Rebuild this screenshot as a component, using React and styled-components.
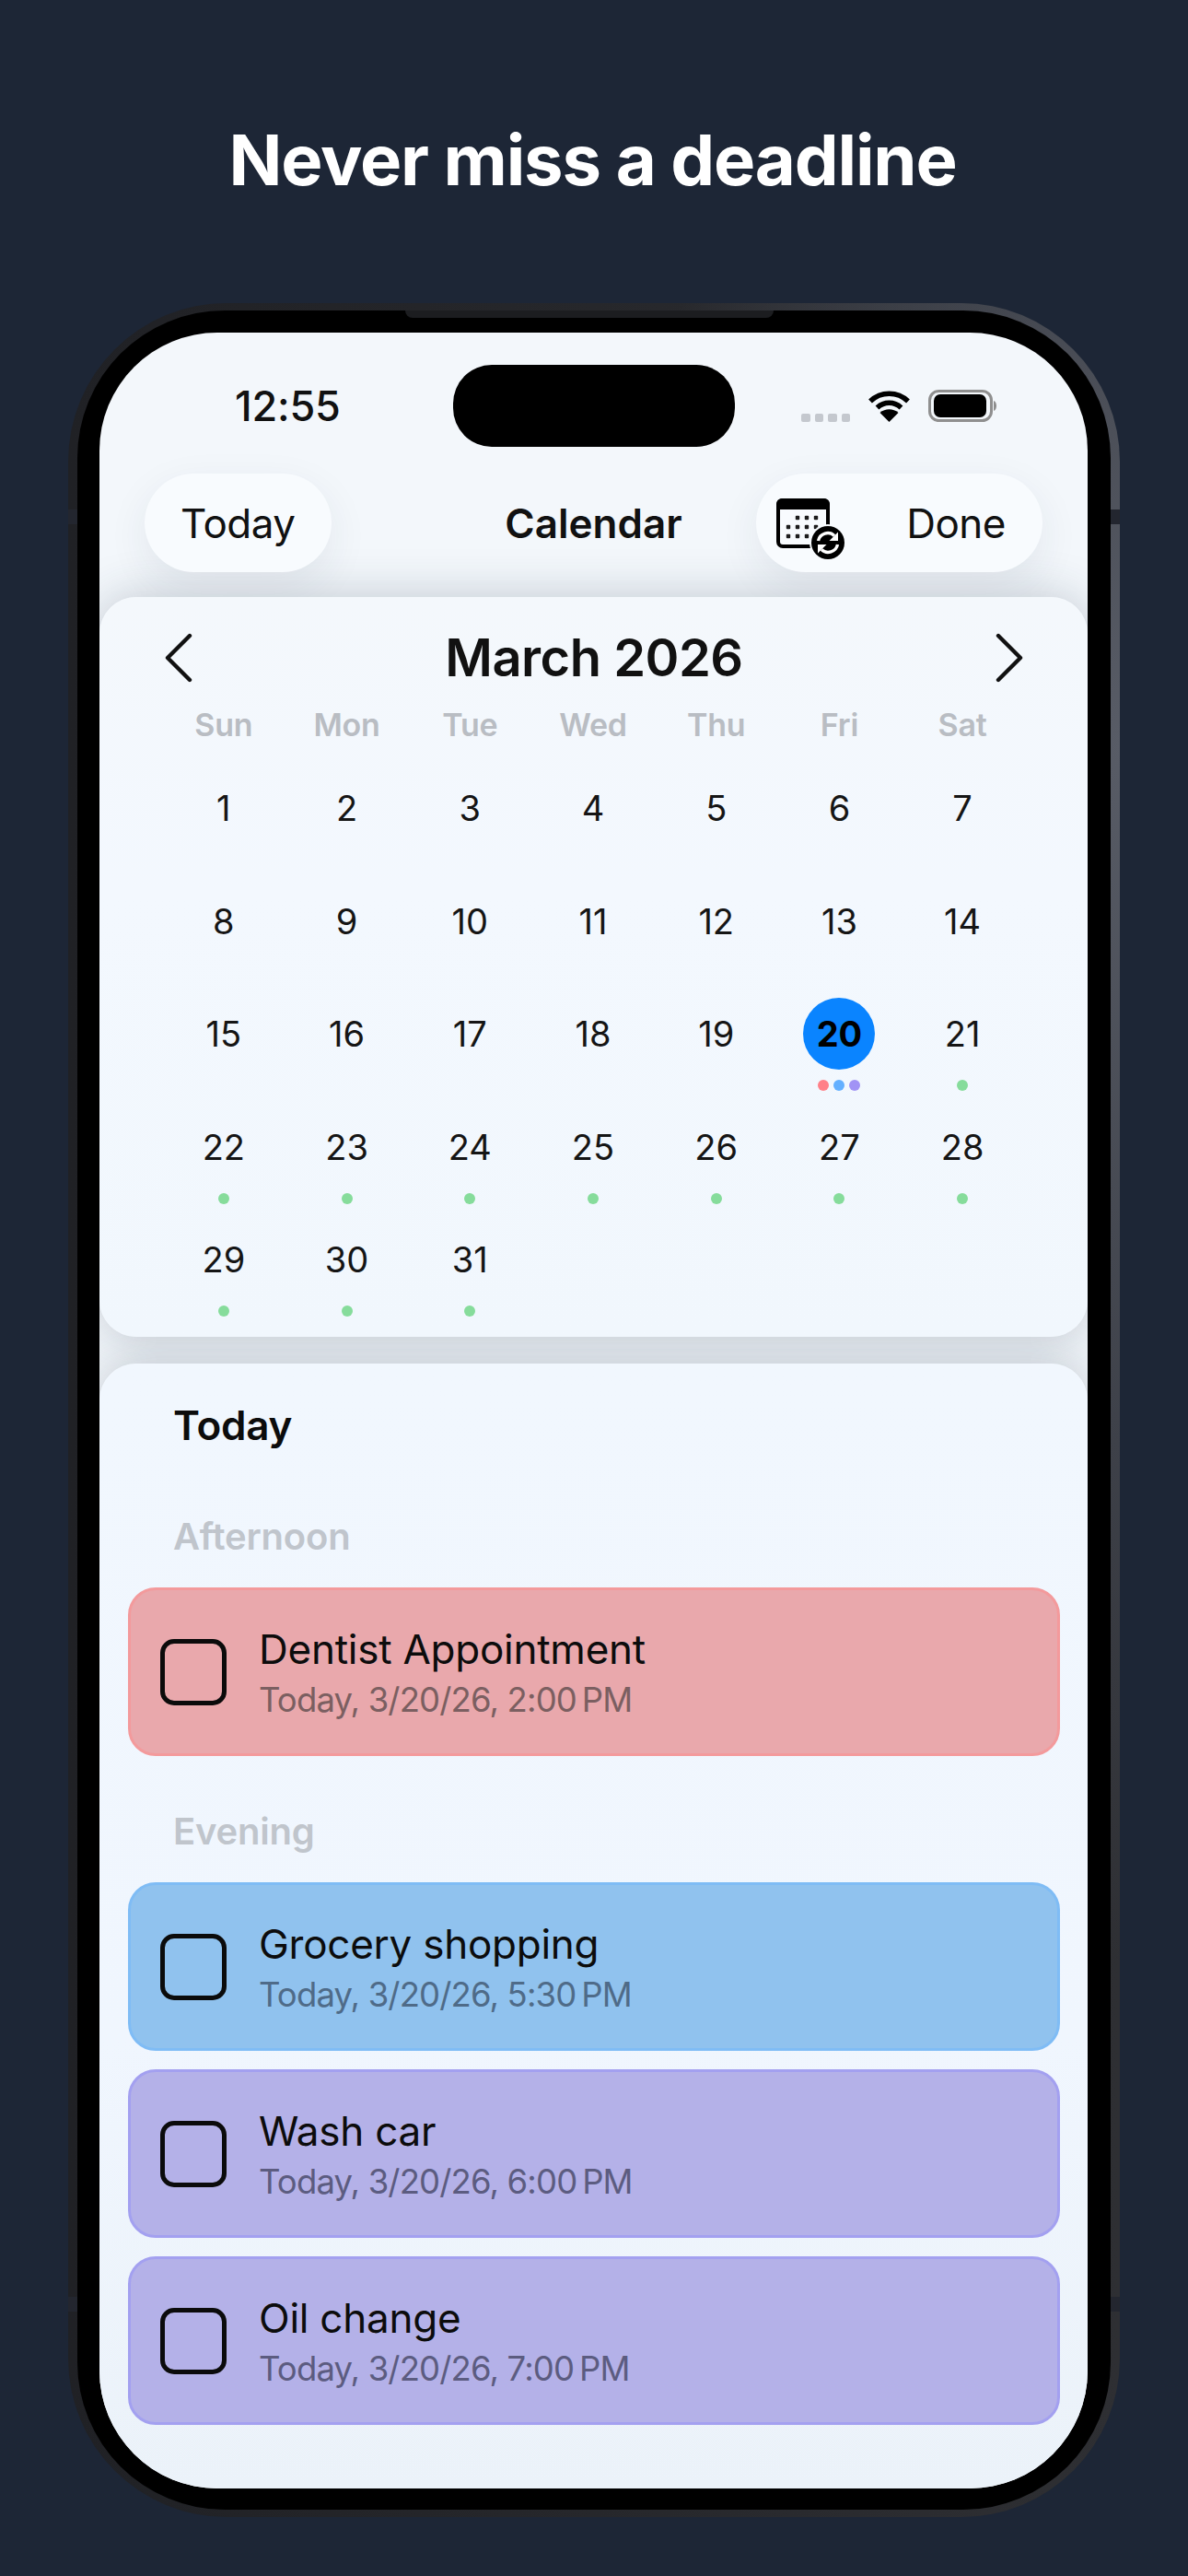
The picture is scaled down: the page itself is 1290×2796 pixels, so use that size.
import React from "react";
import styled, { createGlobalStyle } from "styled-components";

const GlobalStyle = createGlobalStyle`
  html, body {
    margin: 0;
    padding: 0;
    background: #1d2636;
    font-family: "Inter", "Liberation Sans", sans-serif;
  }
`;

const Page = styled.div`
  width: 1290px;
  height: 2796px;
  overflow: hidden;
  background: #1d2636;
  display: flex;
  flex-direction: column;
  align-items: center;
  padding-top: 128px;
  box-sizing: border-box;
`;

const Headline = styled.h1`
  margin: 0 0 111px;
  padding-right: 3px;
  height: 90px;
  line-height: 90px;
  font-size: 76px;
  font-weight: 700;
  letter-spacing: -1.2px;
  color: #fff;
`;

const Phone = styled.div`
  position: relative;
  width: 1142px;
  height: 2403px;
  box-sizing: border-box;
  padding: 8px 10px;
  border-radius: 172px;
  background:
    radial-gradient(ellipse 45% 55% at 100% 20%, #585c66 0%, rgba(70, 74, 84, 0.7) 55%, rgba(60, 62, 68, 0) 100%),
    linear-gradient(90deg, #202125 0%, #26272b 50%, #2e2f33 100%);
`;

const Bezel = styled.div`
  position: relative;
  height: 100%;
  box-sizing: border-box;
  padding: 24px 25px 23px 24px;
  border-radius: 160px;
  background: #000;
`;

const Speaker = styled.div`
  position: absolute;
  top: 0;
  left: 356px;
  width: 400px;
  height: 8px;
  border-radius: 0 0 12px 12px;
  background: #1c1d20;
`;

const Band = styled.div`
  position: absolute;
  top: ${(p) => p.$top}px;
  ${(p) => p.$side}: 0;
  width: 10px;
  height: 16px;
  background: #23262f;
`;

const Screen = styled.div`
  position: relative;
  isolation: isolate;
  height: 100%;
  overflow: hidden;
  border-radius: 128px;
  background: #f3f7fb;
  display: flex;
  flex-direction: column;
`;

const StatusBar = styled.div`
  display: flex;
  padding-top: 35px;
  height: 118px;
  box-sizing: content-box;
`;

const Clock = styled.div`
  width: 384px;
  box-sizing: border-box;
  padding-left: 147px;
  height: 89px;
  line-height: 90px;
  font-size: 45px;
  font-weight: 500;
  letter-spacing: -0.2px;
  color: #111;
`;

const Island = styled.div`
  width: 306px;
  height: 89px;
  border-radius: 42px;
  background: #000;
`;

const StatusIcons = styled.div`
  display: flex;
  align-items: flex-end;
  height: 62px;
  padding-left: 72px;
`;

const SignalDots = styled.div`
  display: flex;
  gap: 5px;
  margin-right: 19px;
`;

const SignalDot = styled.span`
  width: 9.5px;
  height: 9.5px;
  border-radius: 2px;
  background: #c4c8ce;
`;

const NavBar = styled.div`
  display: grid;
  grid-template-columns: 1fr auto 1fr;
  align-items: center;
  padding: 0 49px;
  height: 107px;
  margin-bottom: 27px;
`;

const Pill = styled.div`
  justify-self: ${(p) => (p.$right ? "end" : "start")};
  height: 107px;
  box-sizing: border-box;
  display: flex;
  align-items: center;
  border-radius: 54px;
  background: #f8fbfe;
  box-shadow: 0 14px 44px rgba(40, 55, 75, 0.08);
  padding: ${(p) => (p.$right ? "0 40px 0 22px" : "0 39px")};
  gap: 67px;
  font-size: 44px;
  letter-spacing: -0.5px;
  color: #111;
`;

const NavTitle = styled.div`
  font-size: 44px;
  font-weight: 600;
  color: #111;
`;

const Sheet = styled.section`
  position: relative;
  box-sizing: border-box;

  &::before {
    content: "";
    position: absolute;
    inset: 0;
    z-index: -1;
    border-radius: inherit;
    box-shadow: 0 0 50px rgba(40, 60, 80, 0.25);
  }
`;

const CalendarSheet = styled(Sheet)`
  height: 803px;
  padding: 40px 69px 0 68px;
  border-radius: 40px;
  background: linear-gradient(180deg, #f4f8fc 0%, #f3f8fe 40%, #f1f7fd 100%);
`;

const MonthRow = styled.div`
  display: flex;
  align-items: center;
  justify-content: space-between;
  height: 52px;
  padding: 0 1px 0 3px;
  margin-bottom: 24px;
`;

const MonthTitle = styled.div`
  font-size: 56px;
  font-weight: 600;
  letter-spacing: -0.5px;
  color: #111;
`;

const WeekRow = styled.div`
  display: grid;
  grid-template-columns: repeat(7, 1fr);
  height: 46px;
  margin-bottom: 28px;
`;

const WeekDay = styled.div`
  text-align: center;
  line-height: 46px;
  font-size: 34px;
  font-weight: 600;
  letter-spacing: -0.2px;
  color: #b9bdc3;
`;

const DayGrid = styled.div`
  display: grid;
  grid-template-columns: repeat(7, 1fr);
  grid-auto-rows: 122.5px;
`;

const DayCell = styled.div`
  display: flex;
  flex-direction: column;
  align-items: center;
`;

const DayNumber = styled.div`
  width: 78px;
  height: 78px;
  line-height: 78px;
  text-align: center;
  border-radius: 50%;
  font-size: 38px;
  font-weight: ${(p) => (p.$selected ? 700 : 400)};
  color: ${(p) => (p.$selected ? "#000" : "#151515")};
  background: ${(p) => (p.$selected ? "#0a84ff" : "transparent")};
`;

const DotRow = styled.div`
  display: flex;
  gap: 5px;
  margin-top: 11px;
`;

const Dot = styled.span`
  width: 12px;
  height: 12px;
  border-radius: 50%;
  background: ${(p) => p.$color};
`;

const TasksSheet = styled(Sheet)`
  flex: 1;
  margin-top: 29px;
  padding: 41px 30px 0 31px;
  border-radius: 40px 40px 0 0;
  background: linear-gradient(180deg, #f1f7fe 0%, #f0f6fe 60%, #ebf2f9 100%);
`;

const TasksTitle = styled.h2`
  margin: 0 0 71px 49px;
  line-height: 52px;
  font-size: 44px;
  font-weight: 600;
  letter-spacing: -0.2px;
  color: #0c0c0c;
`;

const GroupLabel = styled.div`
  margin: ${(p) => (p.$first ? "0" : "58px")} 0 31px 49px;
  line-height: 48px;
  font-size: 40px;
  font-weight: 600;
  letter-spacing: -0.2px;
  color: #c0c5cc;
`;

const CardList = styled.div`
  display: flex;
  flex-direction: column;
  gap: 20px;
`;

const tones = {
  red: { bg: "#e9a8ac", line: "#f39a9c", sub: "#7b5f61" },
  blue: { bg: "#90c2ee", line: "#7fbcf5", sub: "#4f6b88" },
  purple: { bg: "#b4b1e8", line: "#a3a0f0", sub: "#5c5c80" },
};

const Card = styled.div`
  height: 183px;
  box-sizing: border-box;
  display: flex;
  align-items: center;
  gap: 35px;
  padding-left: 32px;
  border-radius: 30px;
  border: 3px solid ${(p) => tones[p.$tone].line};
  background: ${(p) => tones[p.$tone].bg};
`;

const CheckBox = styled.div`
  width: 72px;
  height: 72px;
  box-sizing: border-box;
  border: 5px solid #0b0b0b;
  border-radius: 15px;
`;

const CardText = styled.div`
  padding-top: 3px;
  display: flex;
  flex-direction: column;
`;

const CardTitle = styled.div`
  line-height: 52px;
  font-size: 44px;
  letter-spacing: -0.25px;
  color: #0c0c0c;
`;

const CardSub = styled.div`
  margin-top: 5px;
  line-height: 48px;
  font-size: 36.5px;
  letter-spacing: -0.85px;
  color: ${(p) => tones[p.$tone].sub};
`;

const IconSlot = styled.div`
  display: flex;
  margin-top: 14px;
`;

function Wifi() {
  return (
    <svg width="47" height="35" viewBox="0 0 47 35" style={{ marginRight: 19 }}>
      <path d="M3 12.5C14.5 1.5 32.5 1.5 44 12.5" fill="none" stroke="#000" strokeWidth="5.5" />
      <path d="M10.5 19.5C18 12.5 29 12.5 36.5 19.5" fill="none" stroke="#000" strokeWidth="5.5" />
      <path d="M23.5 35L13.5 25C19 20 28 20 33.5 25Z" fill="#000" />
    </svg>
  );
}

function Battery() {
  return (
    <svg width="76" height="35" viewBox="0 0 76 35">
      <rect x="1.5" y="1.5" width="67" height="32" rx="10" fill="none" stroke="#8f8f8f" strokeWidth="3" />
      <rect x="6" y="5" width="57" height="25" rx="7" fill="#000" />
      <path d="M71 12C75 13 75 22 71 23Z" fill="#8d8d8d" />
    </svg>
  );
}

function CalendarSync() {
  const dots = [
    [23, 21], [33, 21], [43, 21],
    [13, 31], [23, 31], [33, 31], [43, 31],
    [13, 41], [23, 41], [33, 41],
  ];
  return (
    <svg width="74" height="67" viewBox="0 0 74 67">
      <rect x="2" y="2" width="54" height="50" rx="5" fill="#f8fbfe" stroke="#000" strokeWidth="4" />
      <path d="M0 12V6a6 6 0 0 1 6-6h46a6 6 0 0 1 6 6v6Z" fill="#000" />
      {dots.map(([x, y]) => (
        <rect key={`${x}-${y}`} x={x - 2.2} y={y - 2.2} width="4.4" height="4.4" rx="1" fill="#1c1c1c" />
      ))}
      <circle cx="56" cy="48" r="20" fill="#f8fbfe" />
      <circle cx="56" cy="48" r="18" fill="#000" />
      <path d="M45.5 46a10.5 10.5 0 0 1 17.5-5.5" fill="none" stroke="#fff" strokeWidth="3.4" />
      <path d="M67 36.5v9.5h-9.5Z" fill="#fff" />
      <path d="M66.5 50a10.5 10.5 0 0 1-17.5 5.5" fill="none" stroke="#fff" strokeWidth="3.4" />
      <path d="M45 59.5V50h9.5Z" fill="#fff" />
    </svg>
  );
}

function Chevron({ flip }) {
  return (
    <svg width="30" height="54" viewBox="0 0 30 54">
      <path
        d={flip ? "M3 3L27 27L3 51" : "M27 3L3 27L27 51"}
        fill="none"
        stroke="#111"
        strokeWidth="4.4"
        strokeLinecap="round"
        strokeLinejoin="round"
      />
    </svg>
  );
}

const weekDays = ["Sun", "Mon", "Tue", "Wed", "Thu", "Fri", "Sat"];
const green = ["#86dc9b"];
const days = Array.from({ length: 31 }, (_, i) => i + 1);

function dotsFor(day) {
  if (day === 20) return ["#ff8088", "#64b0ff", "#a193f5"];
  if (day > 20) return green;
  return [];
}

const groups = [
  { label: "Afternoon", cards: [{ tone: "red", title: "Dentist Appointment", sub: "Today, 3/20/26, 2:00\u202fPM" }] },
  {
    label: "Evening",
    cards: [
      { tone: "blue", title: "Grocery shopping", sub: "Today, 3/20/26, 5:30\u202fPM" },
      { tone: "purple", title: "Wash car", sub: "Today, 3/20/26, 6:00\u202fPM" },
      { tone: "purple", title: "Oil change", sub: "Today, 3/20/26, 7:00\u202fPM" },
    ],
  },
];

export default function App() {
  return (
    <Page>
      <GlobalStyle />
      <Headline>Never miss a deadline</Headline>
      <Phone>
        <Band $side="left" $top={224} />
        <Band $side="right" $top={224} />
        <Band $side="left" $top={2164} />
        <Band $side="right" $top={2164} />
        <Bezel>
          <Speaker />
          <Screen>
            <StatusBar>
              <Clock>12:55</Clock>
              <Island />
              <StatusIcons>
                <SignalDots>
                  <SignalDot />
                  <SignalDot />
                  <SignalDot />
                  <SignalDot />
                </SignalDots>
                <Wifi />
                <Battery />
              </StatusIcons>
            </StatusBar>
            <NavBar>
              <Pill>Today</Pill>
              <NavTitle>Calendar</NavTitle>
              <Pill $right>
                <IconSlot>
                  <CalendarSync />
                </IconSlot>
                Done
              </Pill>
            </NavBar>
            <CalendarSheet>
              <MonthRow>
                <Chevron />
                <MonthTitle>March 2026</MonthTitle>
                <Chevron flip />
              </MonthRow>
              <WeekRow>
                {weekDays.map((d) => (
                  <WeekDay key={d}>{d}</WeekDay>
                ))}
              </WeekRow>
              <DayGrid>
                {days.map((day) => (
                  <DayCell key={day}>
                    <DayNumber $selected={day === 20}>{day}</DayNumber>
                    <DotRow>
                      {dotsFor(day).map((c) => (
                        <Dot key={c} $color={c} />
                      ))}
                    </DotRow>
                  </DayCell>
                ))}
              </DayGrid>
            </CalendarSheet>
            <TasksSheet>
              <TasksTitle>Today</TasksTitle>
              {groups.map((group, i) => (
                <div key={group.label}>
                  <GroupLabel $first={i === 0}>{group.label}</GroupLabel>
                  <CardList>
                    {group.cards.map((card) => (
                      <Card key={card.title} $tone={card.tone}>
                        <CheckBox />
                        <CardText>
                          <CardTitle>{card.title}</CardTitle>
                          <CardSub $tone={card.tone}>{card.sub}</CardSub>
                        </CardText>
                      </Card>
                    ))}
                  </CardList>
                </div>
              ))}
            </TasksSheet>
          </Screen>
        </Bezel>
      </Phone>
    </Page>
  );
}
